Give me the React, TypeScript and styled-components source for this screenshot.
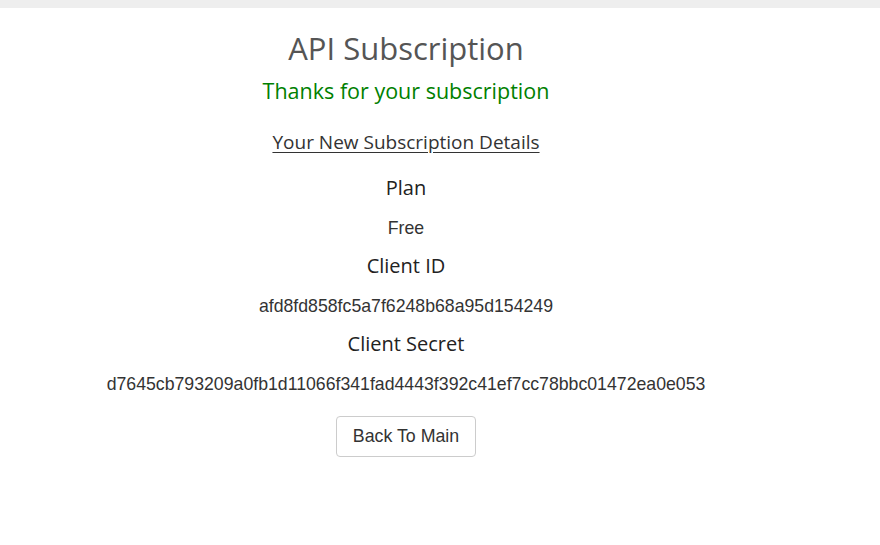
import styled, { createGlobalStyle } from 'styled-components'

const GlobalStyle = createGlobalStyle`
    body {
        margin: 0;
        background: #ffffff;
        font-family: "Liberation Sans", Arial, sans-serif;
    }
`

const details = [
    { label: 'Plan', value: 'Free' },
    { label: 'Client ID', value: 'afd8fd858fc5a7f6248b68a95d154249' },
    { label: 'Client Secret', value: 'd7645cb793209a0fb1d11066f341fad4443f392c41ef7cc78bbc01472ea0e053' },
]

export default function App() {
    return (
        <>
            <GlobalStyle />
            <TopBar />
            <Page>
                <Main>
                    <Title>API Subscription</Title>
                    <Thanks>Thanks for your subscription</Thanks>
                    <SectionHeading>Your New Subscription Details</SectionHeading>
                    {details.map((item) => (
                        <DetailBlock key={item.label}>
                            <Label>{item.label}</Label>
                            <Value>{item.value}</Value>
                        </DetailBlock>
                    ))}
                    <BackButton>Back To Main</BackButton>
                </Main>
            </Page>
        </>
    )
}

const TopBar = styled.div`
    height: 8px;
    background-color: #eeeeee;
`

const Page = styled.div`
    display: grid;
    grid-template-columns: 812px 1fr;
`

const Main = styled.main`
    display: flex;
    flex-direction: column;
    align-items: center;
    text-align: center;
    padding-top: 22px;
`

const Title = styled.h1`
    margin: 0;
    font-family: "Open Sans", "Liberation Sans", sans-serif;
    font-weight: 400;
    font-size: 31px;
    line-height: 36px;
    color: #555555;
`

const Thanks = styled.h3`
    margin: 11px 0 0;
    font-family: "Open Sans", "Liberation Sans", sans-serif;
    font-weight: 400;
    font-size: 21.5px;
    line-height: 28px;
    color: #008000;
`

const SectionHeading = styled.h4`
    margin: 25px 0 7px;
    font-family: "Open Sans", "Liberation Sans", sans-serif;
    font-weight: 400;
    font-size: 19px;
    line-height: 24px;
    color: #333333;
    text-decoration: underline;
    text-underline-offset: 3px;
`

const DetailBlock = styled.section`
    display: flex;
    flex-direction: column;
    align-items: center;
`

const Label = styled.h5`
    margin: 15px 0 0;
    font-family: "Open Sans", "Liberation Sans", sans-serif;
    font-weight: 400;
    font-size: 20px;
    line-height: 24px;
    color: #222222;
`

const Value = styled.p`
    margin: 17px 0 0;
    font-size: 17.7px;
    line-height: 22px;
    color: #333333;
`

const BackButton = styled.button`
    margin-top: 21px;
    padding: 0 16px;
    height: 41px;
    background: #ffffff;
    border: 1px solid #cccccc;
    border-radius: 4px;
    font-family: "Liberation Sans", Arial, sans-serif;
    font-size: 17.8px;
    color: #333333;
    cursor: pointer;
`
